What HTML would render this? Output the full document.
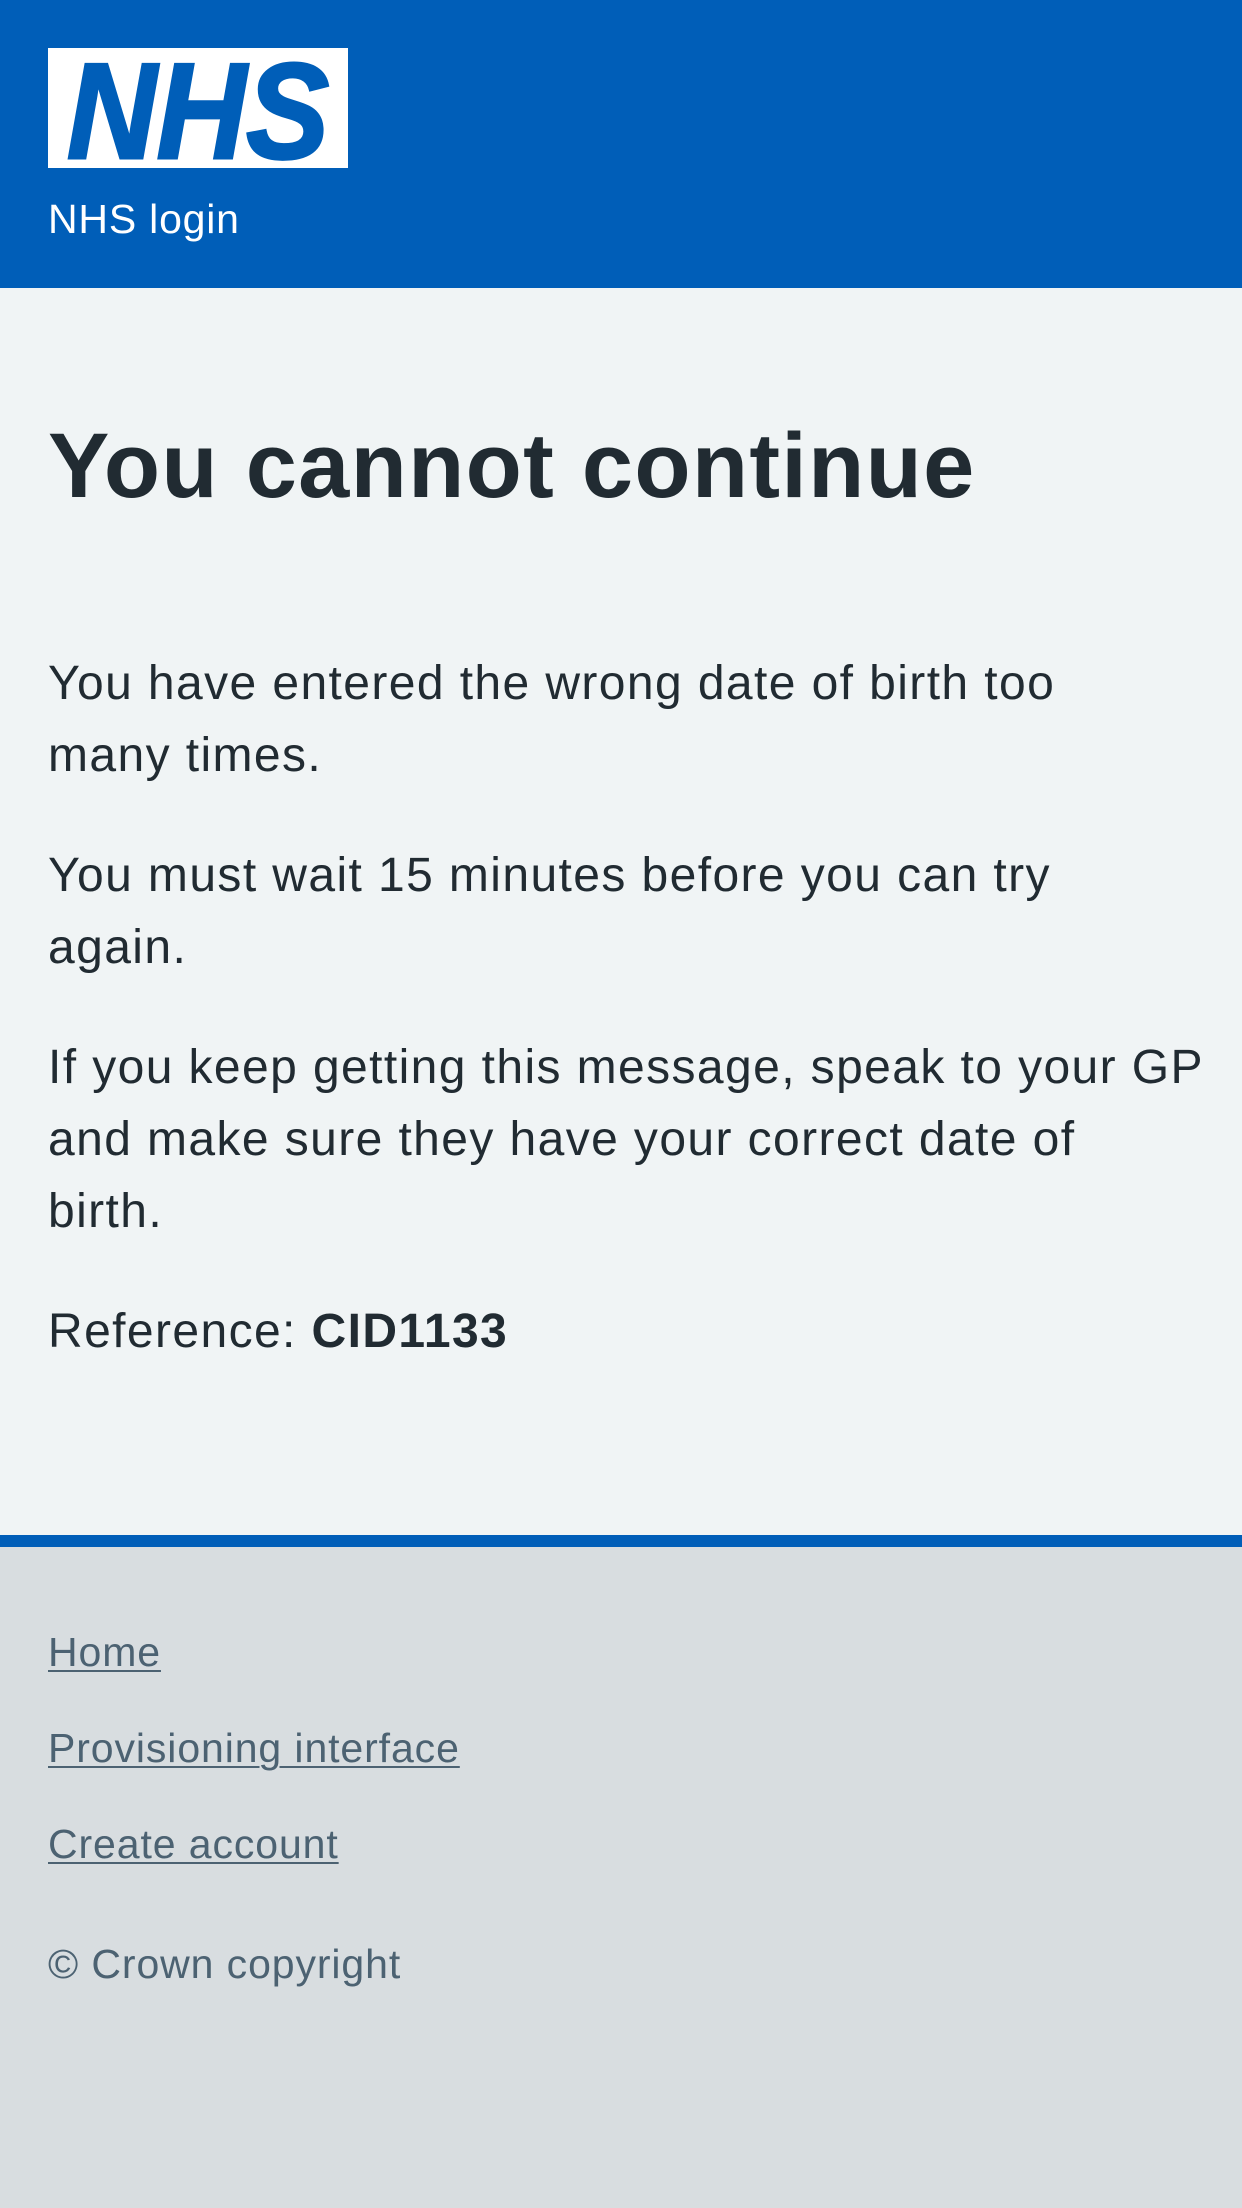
<!DOCTYPE html>
<html><head><meta charset="utf-8"><style>
*{margin:0;padding:0;box-sizing:border-box}
body{width:1242px;height:2208px;background:#d8dde0;font-family:"Liberation Sans",sans-serif;color:#212b32;overflow:hidden}
.hdr{position:absolute;left:0;top:0;width:1242px;height:288px;background:#005eb8}
.logo{position:absolute;left:48px;top:48px}
.login{position:absolute;left:48px;top:196px;color:#fff;font-size:41px;line-height:46px;letter-spacing:0.8px}
.main{position:absolute;left:0;top:288px;width:1242px;height:1247px;background:#f0f4f5}
h1{position:absolute;left:48px;top:411px;font-size:92px;line-height:110px;font-weight:bold;letter-spacing:1.3px}
.p{position:absolute;left:48px;font-size:48px;line-height:72px;width:1190px;letter-spacing:1.4px}
.bar{position:absolute;left:0;top:1535px;width:1242px;height:12px;background:#005eb8}
.f{position:absolute;left:48px;font-size:41px;line-height:48px;color:#4c6272;letter-spacing:0.9px}
.f.u{text-decoration:underline;text-underline-offset:4px;text-decoration-thickness:2px}
</style></head><body>
<div class="hdr">
<svg class="logo" width="300" height="120" viewBox="0 0 300 120"><rect width="300" height="120" fill="#fff"/><text x="150" y="110" text-anchor="middle" font-family="Liberation Sans" font-weight="bold" font-style="italic" font-size="136" fill="#005eb8" stroke="#005eb8" stroke-width="3" textLength="262" lengthAdjust="spacingAndGlyphs">NHS</text></svg>
<div class="login">NHS login</div>
</div>
<div class="main"></div>
<h1>You cannot continue</h1>
<div class="p" style="top:648px">You have entered the wrong date of birth too<br>many times.</div>
<div class="p" style="top:840px">You must wait 15 minutes before you can try<br>again.</div>
<div class="p" style="top:1032px">If you keep getting this message, speak to your GP<br>and make sure they have your correct date of<br>birth.</div>
<div class="p" style="top:1296px">Reference: <b>CID1133</b></div>
<div class="bar"></div>
<div class="f u" style="top:1628px">Home</div>
<div class="f u" style="top:1724px">Provisioning interface</div>
<div class="f u" style="top:1820px">Create account</div>
<div class="f" style="top:1940px">© Crown copyright</div>
</body></html>
